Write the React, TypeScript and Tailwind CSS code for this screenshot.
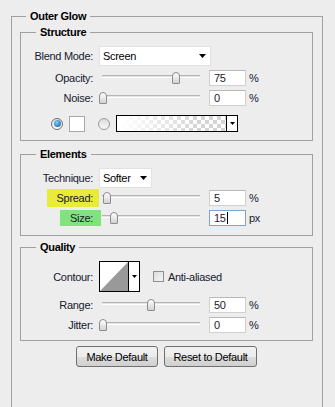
import React from "react";

const Arrow = ({ w = 7, h = 4 }: { w?: number; h?: number }) => (
  <svg width={w} height={h} viewBox={`0 0 ${w} ${h}`}>
    <path d={`M0 0H${w}L${w / 2} ${h}Z`} fill="#000" />
  </svg>
);

function Label({ text }: { text: string }) {
  return (
    <div className="w-[78px] shrink-0 flex justify-end">
      <span className="pr-[6px]">{text}</span>
    </div>
  );
}

function Slider({ thumb }: { thumb: string }) {
  return (
    <div className="relative w-[102px] h-[16px] shrink-0">
      <div className="absolute left-[3px] right-[1px] top-[5px] h-[3px] bg-[#e4e4e4] border-t border-t-[#b4b4b4] border-b border-b-white" />
      <div
        className={`absolute top-[2px] w-[8px] h-[12px] rounded-t-[4px] rounded-b-[1px] border border-[#8c8c8c] bg-[linear-gradient(#ffffff,#d2d2d2)] ${thumb}`}
      />
    </div>
  );
}

function Field({ value, unit, focus = false }: { value: string; unit: string; focus?: boolean }) {
  return (
    <>
      <div
        className={`ml-[8px] w-[37px] h-[16px] shrink-0 bg-white border flex items-center pl-[4px] text-[#1a2030] ${
          focus ? "border-[#7da2ce]" : "border-[#d0d0d0] border-t-[#b8b8b8]"
        }`}
      >
        {value}
        {focus && <span className="inline-block w-[1px] h-[12px] bg-black ml-[1px]" />}
      </div>
      <span className="ml-[3px]">{unit}</span>
    </>
  );
}

function Group({ title, className, children }: { title: string; className: string; children: React.ReactNode }) {
  return (
    <fieldset className={`w-[293px] min-w-0 border border-[#a0a0a0] ${className}`}>
      <legend className="ml-[15px] px-[4px] font-bold text-black">{title}</legend>
      {children}
    </fieldset>
  );
}

export default function App() {
  return (
    <div className="w-[335px] h-[407px] overflow-hidden bg-[#ededed] pt-[9px] pl-[11px] font-['Liberation_Sans',Arial,sans-serif] text-[11px] leading-[14px] tracking-[-0.3px] text-[#15202f]">
      <fieldset className="w-[312px] h-[420px] min-w-0 border border-[#a0a0a0] pl-[8px]">
        <legend className="ml-[6px] px-[4px] font-bold text-black">Outer Glow</legend>

        <Group title="Structure" className="mt-[2px] pb-[8px]">
          <div className="flex items-center h-[20px] mt-[7px]">
            <Label text="Blend Mode:" />
            <div className="w-[112px] h-[20px] bg-white border border-[#e2e2e2] flex items-center justify-between pl-[3px] pr-[4px] text-black">
              Screen
              <Arrow />
            </div>
          </div>
          <div className="flex items-center h-[16px] mt-[4px]">
            <Label text="Opacity:" />
            <Slider thumb="left-[73px]" />
            <Field value="75" unit="%" />
          </div>
          <div className="flex items-center h-[16px] mt-[4px]">
            <Label text="Noise:" />
            <Slider thumb="left-[0px]" />
            <Field value="0" unit="%" />
          </div>
          <div className="flex items-center h-[17px] mt-[9px] pl-[30px]">
            <div className="w-[12px] h-[12px] rounded-full border border-[#6f6f6f] bg-[linear-gradient(#e0e0e0,#ffffff)] flex items-center justify-center">
              <div className="w-[7px] h-[7px] rounded-full bg-[radial-gradient(circle_at_40%_35%,#7fd0ff,#0b4f9c)]" />
            </div>
            <div className="ml-[6px] w-[16px] h-[16px] bg-white border border-[#a8a8a8]" />
            <div className="ml-[13px] w-[12px] h-[12px] rounded-full border border-[#9a9a9a] bg-[linear-gradient(#dcdcdc,#f8f8f8)]" />
            <div className="ml-[6px] w-[122px] h-[17px] border border-black flex">
              <div className="flex-1 bg-[linear-gradient(to_right,#ffffff_5%,rgba(255,255,255,0)_75%),repeating-conic-gradient(#d4d4d4_0_25%,#ffffff_0_50%)] bg-size-[100%_100%,8px_8px]" />
              <div className="w-[11px] border-l border-black bg-white flex items-center justify-center">
                <Arrow w={5} h={3} />
              </div>
            </div>
          </div>
        </Group>

        <Group title="Elements" className="mt-[6px] pb-[9px]">
          <div className="flex items-center h-[20px] mt-[7px]">
            <Label text="Technique:" />
            <div className="w-[53px] h-[20px] bg-white border border-[#e2e2e2] flex items-center justify-between pl-[3px] pr-[4px] text-black">
              Softer
              <Arrow />
            </div>
          </div>
          <div className="flex items-center h-[18px] mt-[1px]">
            <div className="w-[78px] shrink-0 flex justify-end">
              <span className="h-[18px] flex items-center pl-[10px] pr-[6px] bg-[#e9ea3c]">Spread:</span>
            </div>
            <Slider thumb="left-[4px]" />
            <Field value="5" unit="%" />
          </div>
          <div className="flex items-center h-[17px] mt-[2px]">
            <div className="w-[78px] shrink-0 flex justify-end">
              <span className="h-[16px] flex items-center pl-[10px] pr-[8px] mr-[-2px] bg-[#80e47c]">Size:</span>
            </div>
            <Slider thumb="left-[11px]" />
            <Field value="15" unit="px" focus />
          </div>
        </Group>

        <Group title="Quality" className="mt-[4px] pb-[7px]">
          <div className="flex items-center h-[31px] mt-[7px]">
            <Label text="Contour:" />
            <div className="w-[41px] h-[31px] border border-black flex bg-white">
              <svg className="flex-1 h-full" viewBox="0 0 28 29" preserveAspectRatio="none">
                <path d="M0 29L28 0V29Z" fill="#999" />
              </svg>
              <div className="w-[11px] border-l border-black flex items-center justify-center">
                <Arrow w={5} h={3} />
              </div>
            </div>
            <div className="ml-[13px] w-[11px] h-[11px] border border-[#8e8f8f] bg-[linear-gradient(135deg,#dcdcdc,#f6f6f6)]" />
            <span className="ml-[4px]">Anti-aliased</span>
          </div>
          <div className="flex items-center h-[16px] mt-[5px]">
            <Label text="Range:" />
            <Slider thumb="left-[48px]" />
            <Field value="50" unit="%" />
          </div>
          <div className="flex items-center h-[16px] mt-[4px]">
            <Label text="Jitter:" />
            <Slider thumb="left-[0px]" />
            <Field value="0" unit="%" />
          </div>
        </Group>

        <div className="w-[293px] flex justify-center gap-[6px] mt-[5px] text-black">
          <button className="w-[82px] h-[21px] rounded-[3px] border border-[#707070] bg-[linear-gradient(#f2f2f2_0%,#ebebeb_50%,#dddddd_51%,#cfcfcf_100%)]">
            Make Default
          </button>
          <button className="w-[93px] h-[21px] rounded-[3px] border border-[#707070] bg-[linear-gradient(#f2f2f2_0%,#ebebeb_50%,#dddddd_51%,#cfcfcf_100%)]">
            Reset to Default
          </button>
        </div>
      </fieldset>
    </div>
  );
}
